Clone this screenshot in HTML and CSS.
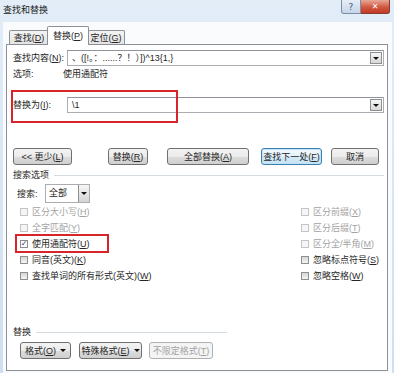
FILE: index.html
```html
<!DOCTYPE html>
<html lang="zh-CN">
<head>
    <meta charset="UTF-8">
    <meta name="viewport" content="width=device-width, initial-scale=1.0">
    <title>查找和替换</title>
    <link rel="stylesheet" href="styles.css">
</head>
<body>
    <div class="window">
        <div class="titlebar">
            <span class="title">查找和替换</span>
            <div class="caption-btns">
                <span class="cap-help">?</span>
                <span class="cap-close">✕</span>
            </div>
        </div>
        <div class="client">
            <div class="tabs">
                <span class="tab tab-find">查找(<u>D</u>)</span>
                <span class="tab tab-replace active">替换(<u>P</u>)</span>
                <span class="tab tab-goto">定位(<u>G</u>)</span>
            </div>
            <div class="panel">
                <div class="field-row find-row">
                    <label class="field-label">查找内容(<u>N</u>):</label>
                    <div class="combo">
                        <span class="combo-text">、([!。：......？！）])^13{1,}</span>
                        <span class="combo-btn"><span class="arrow"></span></span>
                    </div>
                </div>
                <div class="options-row">
                    <span class="options-label">选项:</span>
                    <span>使用通配符</span>
                </div>
                <div class="field-row replace-row">
                    <label class="field-label">替换为(<u>I</u>):</label>
                    <div class="combo">
                        <span class="combo-text">\1</span>
                        <span class="combo-btn"><span class="arrow"></span></span>
                    </div>
                </div>
                <div class="button-row">
                    <span class="btn btn-less"><span>&lt;&lt; 更少(<u>L</u>)</span></span>
                    <span class="btn btn-replace"><span>替换(<u>R</u>)</span></span>
                    <span class="btn btn-all"><span>全部替换(<u>A</u>)</span></span>
                    <span class="btn btn-next default"><span>查找下一处(<u>F</u>)</span></span>
                    <span class="btn btn-cancel"><span>取消</span></span>
                </div>
                <div class="group-head">
                    <span>搜索选项</span>
                    <span class="rule"></span>
                </div>
                <div class="search-row">
                    <span class="search-label">搜索:</span>
                    <div class="select">
                        <span class="select-text">全部</span>
                        <span class="select-btn"><span class="arrow"></span></span>
                    </div>
                </div>
                <div class="checks">
                    <div class="check-col check-left">
                        <div class="check disabled"><span class="box"></span><span>区分大小写(<u>H</u>)</span></div>
                        <div class="check disabled"><span class="box"></span><span>全字匹配(<u>Y</u>)</span></div>
                        <div class="check"><span class="box checked">✓</span><span>使用通配符(<u>U</u>)</span></div>
                        <div class="check"><span class="box"></span><span>同音(英文)(<u>K</u>)</span></div>
                        <div class="check"><span class="box"></span><span>查找单词的所有形式(英文)(<u>W</u>)</span></div>
                    </div>
                    <div class="check-col check-right">
                        <div class="check disabled"><span class="box"></span><span>区分前缀(<u>X</u>)</span></div>
                        <div class="check disabled"><span class="box"></span><span>区分后缀(<u>T</u>)</span></div>
                        <div class="check disabled"><span class="box"></span><span>区分全/半角(<u>M</u>)</span></div>
                        <div class="check"><span class="box"></span><span>忽略标点符号(<u>S</u>)</span></div>
                        <div class="check"><span class="box"></span><span>忽略空格(<u>W</u>)</span></div>
                    </div>
                </div>
                <div class="group-head replace-head">
                    <span>替换</span>
                    <span class="rule"></span>
                </div>
                <div class="bottom-buttons">
                    <span class="btn btn-format"><span>格式(<u>O</u>)</span><span class="arrow"></span></span>
                    <span class="btn btn-special"><span>特殊格式(<u>E</u>)</span><span class="arrow"></span></span>
                    <span class="btn btn-noformat disabled"><span>不限定格式(<u>T</u>)</span></span>
                </div>
            </div>
        </div>
        <div class="mark mark-replace"></div>
        <div class="mark mark-wildcard"></div>
    </div>
</body>
</html>
```

FILE: styles.css
```css
body {
    margin: 0;
    font-family: "Liberation Sans", "Noto Sans CJK SC", sans-serif;
    font-size: 9px;
    line-height: 12px;
    color: #262626;
    background-color: #fff;
}
u {
    text-decoration-thickness: 1px;
    text-underline-offset: 1px;
}
.window {
    position: relative;
    width: 394px;
    height: 373px;
    background: linear-gradient(#e2edf8, #cddff1);
    display: flex;
    flex-direction: column;
    overflow: hidden;
}
.titlebar {
    display: flex;
    height: 22px;
    flex-shrink: 0;
}
.title {
    padding: 4px 0 0 3px;
    color: #222;
}
.caption-btns {
    margin-left: auto;
    margin-right: 4px;
    display: flex;
    height: 14px;
}
.cap-help, .cap-close {
    box-sizing: border-box;
    height: 14px;
    display: flex;
    align-items: center;
    justify-content: center;
    border: 1px solid #7d8ea3;
    border-top: none;
}
.cap-help {
    width: 20px;
    border-radius: 0 0 0 3px;
    background: linear-gradient(#e6eef8, #c5d5e8);
    color: #4a5a70;
    font-family: "DejaVu Sans", sans-serif;
    font-size: 9px;
}
.cap-close {
    width: 29px;
    border-left: none;
    border-color: #8b3a30;
    border-radius: 0 0 3px 0;
    background: linear-gradient(#e9a797, #d0583f 55%, #c23a26);
    color: #fff;
    font-family: "DejaVu Sans", sans-serif;
    font-size: 8px;
    font-weight: bold;
}
.client {
    flex: 1;
    margin: 0 2px 0 3px;
    padding: 4px 0 0 3px;
    background-color: #fafbfc;
}
.tabs {
    position: relative;
    z-index: 1;
    display: flex;
    align-items: flex-end;
    height: 18px;
    padding-left: 3px;
}
.tab {
    box-sizing: border-box;
    height: 14px;
    display: flex;
    align-items: center;
    justify-content: center;
    border: 1px solid #8d9096;
    border-bottom: none;
    border-radius: 2px 2px 0 0;
    background: linear-gradient(#f4f4f4, #e3e3e3);
}
.tab-find {
    width: 40px;
}
.tab-replace {
    width: 42px;
    margin-left: -2px;
}
.tab-goto {
    width: 37px;
    margin-left: -1px;
    border-left: none;
}
.tab.active {
    position: relative;
    z-index: 1;
    height: 19px;
    margin-bottom: -1px;
    background: #fff;
}
.panel {
    box-sizing: border-box;
    width: 382px;
    height: 327px;
    border: 1px solid #8d9096;
    background-color: #fff;
    padding: 5px 3px 0 6px;
}
.field-row {
    display: flex;
    align-items: center;
    height: 16px;
}
.field-label {
    width: 54px;
    flex-shrink: 0;
}
.combo {
    flex: 1;
    box-sizing: border-box;
    height: 16px;
    display: flex;
    align-items: center;
    border: 1px solid #abadb3;
    border-top-color: #8f939c;
    background-color: #fff;
}
.combo-text {
    padding-left: 4px;
    white-space: pre;
}
.combo-btn {
    box-sizing: border-box;
    margin-left: auto;
    margin-right: 1px;
    width: 12px;
    height: 12px;
    display: flex;
    align-items: center;
    justify-content: center;
    border: 1px solid #8e8f8f;
    background: linear-gradient(#f6f6f6, #d8d8d8);
}
.arrow {
    display: inline-block;
    width: 0;
    height: 0;
    border-left: 3px solid transparent;
    border-right: 3px solid transparent;
    border-top: 3px solid #111;
}
.options-row {
    display: flex;
    height: 12px;
    margin-top: 2px;
}
.options-label {
    width: 50px;
}
.replace-row {
    margin-top: 17px;
}
.button-row {
    display: flex;
    margin-top: 35px;
}
.btn {
    box-sizing: border-box;
    height: 17px;
    display: flex;
    align-items: center;
    justify-content: center;
    gap: 4px;
    border: 1px solid #707070;
    border-radius: 3px;
    background: linear-gradient(#f3f3f3, #ebebeb 50%, #dddddd 51%, #cfcfcf);
    white-space: nowrap;
}
.btn.default {
    border-color: #3c7fb1;
    background: linear-gradient(#f2f9fd, #e4f2fb 50%, #d4ebf8 51%, #c6e2f4);
    box-shadow: inset 0 0 0 1px #bfe3f8;
}
.btn.disabled {
    border-color: #adb2b5;
    background: #f4f4f4;
    color: #a3a3a3;
}
.btn-less {
    width: 59px;
}
.btn-replace {
    width: 40px;
    margin-left: 36px;
}
.btn-all {
    width: 82px;
    margin-left: 19px;
}
.btn-next {
    width: 61px;
    margin-left: 12px;
}
.btn-cancel {
    width: 48px;
    margin-left: 9px;
}
.group-head {
    display: flex;
    align-items: center;
    height: 12px;
    margin-top: 4px;
}
.rule {
    flex: 1;
    height: 1px;
    margin-left: 5px;
    background-color: #d5dde3;
}
.search-row {
    display: flex;
    align-items: center;
    height: 19px;
    margin-top: 3px;
    padding-left: 4px;
}
.search-label {
    width: 28px;
}
.select {
    box-sizing: border-box;
    width: 45px;
    height: 19px;
    display: flex;
    border: 1px solid #abadb3;
    background-color: #fff;
}
.select-text {
    flex: 1;
    padding-left: 3px;
    line-height: 17px;
}
.select-btn {
    width: 10px;
    display: flex;
    align-items: center;
    justify-content: center;
    border-left: 1px solid #8e8f8f;
    background: linear-gradient(#f6f6f6, #d5d5d5);
}
.checks {
    display: flex;
    justify-content: space-between;
    margin-top: 1px;
}
.check-left {
    padding-left: 7px;
}
.check-right {
    width: 83px;
}
.check {
    display: flex;
    align-items: center;
    height: 16px;
    white-space: nowrap;
}
.box {
    box-sizing: border-box;
    width: 8px;
    height: 8px;
    margin-right: 4px;
    display: flex;
    align-items: center;
    justify-content: center;
    border: 1px solid #8e8f8f;
    background: linear-gradient(#d6d6d6, #f4f4f4);
}
.box.checked {
    background: #fff;
    color: #1c3c78;
    font-family: "DejaVu Sans", sans-serif;
    font-size: 8px;
    font-weight: bold;
}
.check.disabled {
    color: #a3a3a3;
}
.check.disabled .box {
    border-color: #c4c4c4;
    background: #f6f6f6;
}
.replace-head {
    width: 214px;
    margin-top: 42px;
}
.bottom-buttons {
    display: flex;
    margin-top: 4px;
    padding-left: 7px;
}
.btn-format {
    width: 51px;
}
.btn-special {
    width: 63px;
    margin-left: 8px;
}
.btn-noformat {
    width: 64px;
    margin-left: 7px;
}
.mark {
    position: absolute;
    box-sizing: border-box;
    border: 2px solid #d7252c;
}
.mark-replace {
    left: 11px;
    top: 90px;
    width: 167px;
    height: 33px;
}
.mark-wildcard {
    left: 15px;
    top: 234px;
    width: 94px;
    height: 19px;
}
```
